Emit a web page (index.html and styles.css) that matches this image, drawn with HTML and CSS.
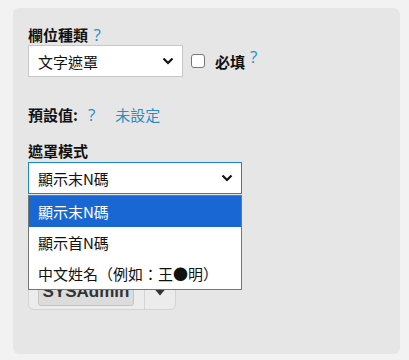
FILE: index.html
```html
<!DOCTYPE html>
<html lang="zh-Hant">
<head>
    <meta charset="UTF-8">
    <meta name="viewport" content="width=device-width, initial-scale=1.0">
    <title>欄位設定</title>
    <link rel="stylesheet" href="styles.css">
</head>
<body>
    <div class="panel">
        <div class="field">
            <div class="label">欄位種類 <span class="help">?</span></div>
            <div class="type-row">
                <div class="select type-select">
                    <span>文字遮罩</span>
                    <svg class="chevron" width="12" height="8" viewBox="0 0 12 8"><path d="M1.5 1.5 L6 6 L10.5 1.5" fill="none" stroke="#111" stroke-width="2.2"/></svg>
                </div>
                <span class="checkbox"></span>
                <span class="label-inline">必填</span>
                <span class="help help-sup">?</span>
            </div>
        </div>

        <div class="default-row">
            <span class="label-inline">預設值:</span>
            <span class="help">?</span>
            <span class="link">未設定</span>
        </div>

        <div class="field mask-field">
            <div class="label">遮罩模式</div>
            <div class="select mask-select open">
                <span>顯示末N碼</span>
                <svg class="chevron" width="12" height="8" viewBox="0 0 12 8"><path d="M1.5 1.5 L6 6 L10.5 1.5" fill="none" stroke="#111" stroke-width="2.2"/></svg>
            </div>
            <!-- 展開中的選單 -->
            <ul class="dropdown">
                <li class="active">顯示末N碼</li>
                <li>顯示首N碼</li>
                <li>中文姓名（例如：王●明）</li>
            </ul>

            <div class="btn-group">
                <span class="btn-user">SYSAdmin</span>
                <span class="btn-caret">
                    <svg width="12" height="8" viewBox="0 0 12 8"><path d="M0.5 1 L11.5 1 L6 7.5 Z" fill="#333"/></svg>
                </span>
            </div>
        </div>
    </div>
</body>
</html>
```

FILE: styles.css
```css
* {
    box-sizing: border-box;
    margin: 0;
    padding: 0;
}

body {
    font-family: "Noto Sans CJK TC", "Noto Sans", sans-serif;
    font-size: 15px;
    color: #111;
    background: #f2f2f2;
    padding: 8px 9px 6px 13px;
}

.panel {
    background: #e6e6e6;
    border-radius: 6px;
    height: 346px;
    padding: 16px 15px;
}

.label {
    font-weight: bold;
    line-height: 21px;
}

.label-inline {
    font-weight: bold;
}

.help {
    font-family: "Open Sans", "Noto Sans", sans-serif;
    font-size: 17px;
    color: #1f8fd3;
    font-weight: normal;
    margin-left: 2px;
    line-height: 1;
}

.help-sup {
    position: relative;
    top: -5px;
    margin-left: 5px;
}

.type-row {
    display: flex;
    align-items: center;
}

.select {
    display: flex;
    align-items: center;
    justify-content: space-between;
    height: 32px;
    background: #fff;
    border: 1px solid #c8c8c8;
    padding: 0 8px 0 9px;
    line-height: 1;
}

.type-select {
    width: 155px;
}

.checkbox {
    width: 14px;
    height: 14px;
    border: 1px solid #767676;
    border-radius: 3px;
    background: #fff;
    margin: 0 10px 0 8px;
}

.default-row {
    display: flex;
    align-items: center;
    margin-top: 27px;
    line-height: 21px;
}

.default-row .help {
    margin-left: 10px;
}

.link {
    color: #2a8bc8;
    margin-left: 20px;
}

.mask-field {
    position: relative;
    margin-top: 15px;
}

.mask-select {
    width: 214px;
    margin-top: 1px;
}

.mask-select.open {
    border-color: #1a86c8;
}

.dropdown {
    position: absolute;
    top: 55px;
    left: 0;
    width: 214px;
    list-style: none;
    background: #fff;
    border: 1px solid #767676;
    z-index: 2;
}

.dropdown li {
    height: 31px;
    line-height: 31px;
    padding-left: 9px;
    white-space: nowrap;
}

.dropdown li.active {
    background: #1967d2;
    color: #fff;
}

.btn-group {
    display: flex;
    width: 148px;
    height: 40px;
    margin-top: 76px;
    border: 1px solid #d4d4d4;
    border-radius: 6px;
    background: #ececec;
}

.btn-user {
    margin: 0 0 3px 9px;
    width: 96px;
    align-self: flex-end;
    height: 30px;
    background: #dcdcdc;
    border: 1px solid #c4c4c4;
    border-radius: 3px;
    font-family: "Liberation Sans", Arial, sans-serif;
    font-weight: bold;
    font-size: 17px;
    line-height: 30px;
    text-align: center;
    color: #333;
}

.btn-caret {
    margin-left: 10px;
    border-left: 1px solid #d4d4d4;
    flex: 1;
    display: flex;
    align-items: center;
    justify-content: center;
    padding-top: 4px;
}
```
